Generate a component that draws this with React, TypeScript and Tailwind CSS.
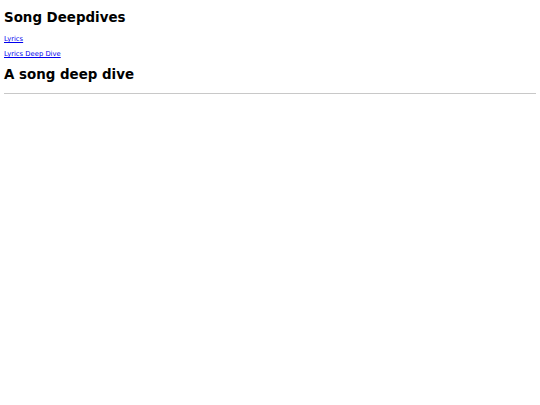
export default function App() {
  return (
    <div className="min-h-[405px] bg-white px-1 pt-[10px] text-black" style={{ fontFamily: '"DejaVu Sans", sans-serif' }}>
      <h1 className="text-[13.4px] font-bold leading-[16px]">Song Deepdives</h1>
      <div className="mt-[9px] flex flex-col gap-[7px] text-[6.8px] leading-[8px]">
        <a href="#" className="text-[#0000ee] underline">Lyrics</a>
        <a href="#" className="text-[#0000ee] underline">Lyrics Deep Dive</a>
      </div>
      <h2 className="mt-[9px] text-[13.4px] font-bold leading-[16px]">A song deep dive</h2>
      <hr className="mt-[10px] border-t border-[#c8c8c8]" />
    </div>
  );
}
